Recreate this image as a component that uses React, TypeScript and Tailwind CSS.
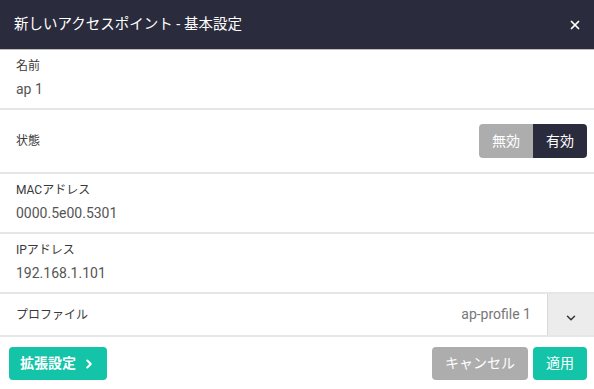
import { ChevronDown, ChevronRight, X } from "lucide-react";

const font = { fontFamily: 'Roboto, "Noto Sans CJK JP", sans-serif' };

const Field = ({ label, value }: { label: string; value: string }) => (
  <div className="h-[60px] px-4 pt-[8px] border-b-2 border-[#e6e6e6]">
    <p className="text-[12px] leading-[16px] text-[#3a3a3a]">{label}</p>
    <p className="mt-[6px] text-[14px] leading-[18px] text-[#555]">{value}</p>
  </div>
);

export default function App() {
  return (
    <div className="w-[594px] h-[389px] bg-white" style={font}>
      <header className="h-[50px] bg-[#2a2b3d] flex items-center justify-between pl-[14px] pr-[12px] border-b border-[#bdbdbd]">
        <h1 className="text-[14.5px] text-white">新しいアクセスポイント - 基本設定</h1>
        <X className="w-[14px] h-[14px] text-white" strokeWidth={3} />
      </header>
      <Field label="名前" value="ap 1" />
      <div className="h-[64px] flex items-center justify-between pl-4 pr-[7px] border-b-2 border-[#e6e6e6]">
        <p className="text-[12px] text-[#3a3a3a]">状態</p>
        <div className="flex h-[34px] rounded overflow-hidden text-[14px] text-white">
          <span className="w-[54px] flex items-center justify-center bg-[#adadad]">無効</span>
          <span className="w-[54px] flex items-center justify-center bg-[#2a2b3d]">有効</span>
        </div>
      </div>
      <Field label="MACアドレス" value="0000.5e00.5301" />
      <Field label="IPアドレス" value="192.168.1.101" />
      <div className="h-[43px] flex items-stretch border-b-2 border-[#e6e6e6]">
        <p className="flex-1 flex items-center pl-4 text-[12px] text-[#3a3a3a]">プロファイル</p>
        <span className="flex items-center pr-4 text-[14px] text-[#777]">ap-profile 1</span>
        <div className="w-[47px] bg-[#ececec] border-l border-[#d8d8d8] flex items-center justify-center pt-[6px]">
          <ChevronDown className="w-[14px] h-[14px] text-[#333]" strokeWidth={2.5} />
        </div>
      </div>
      <footer className="flex items-center justify-between pr-[7px] pl-[9px] pt-[10px]">
        <button className="h-[33px] w-[98px] rounded bg-[#13c4a8] text-white text-[14px] font-bold flex items-center justify-center gap-[6px]">
          拡張設定
          <ChevronRight className="w-[14px] h-[14px]" strokeWidth={3.5} />
        </button>
        <div className="flex gap-[5px]">
          <button className="h-[33px] w-[96px] rounded bg-[#adadad] text-white text-[14px]">キャンセル</button>
          <button className="h-[33px] w-[54px] rounded bg-[#13c4a8] text-white text-[14px]">適用</button>
        </div>
      </footer>
    </div>
  );
}
